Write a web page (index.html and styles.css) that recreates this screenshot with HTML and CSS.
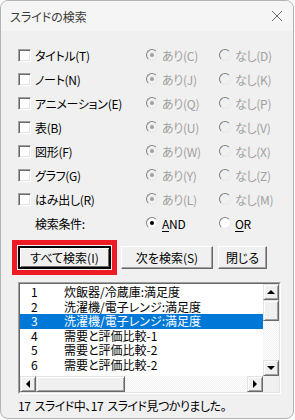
FILE: index.html
```html
<!DOCTYPE html>
<html lang="ja">
<head>
<meta charset="UTF-8">
<meta name="viewport" content="width=device-width, initial-scale=1.0">
<title>スライドの検索</title>
<link rel="stylesheet" href="styles.css">
</head>
<body>
<div class="window">
  <div class="titlebar">
    <span class="title">スライドの検索</span>
    <svg class="close" width="12" height="12" viewBox="0 0 12 12">
      <path d="M1 1 L11 11 M11 1 L1 11" stroke="#6a6a6a" stroke-width="1" fill="none"/>
    </svg>
  </div>

  <div class="content">
    <div class="options">
      <div class="row">
        <label class="check"><span class="box"></span>タイトル(T)</label>
        <span class="radio off on"><span class="dot"></span>あり(C)</span>
        <span class="radio off"><span class="dot"></span>なし(D)</span>
      </div>
      <div class="row">
        <label class="check"><span class="box"></span>ノート(N)</label>
        <span class="radio off on"><span class="dot"></span>あり(J)</span>
        <span class="radio off"><span class="dot"></span>なし(K)</span>
      </div>
      <div class="row">
        <label class="check"><span class="box"></span>アニメーション(E)</label>
        <span class="radio off on"><span class="dot"></span>あり(Q)</span>
        <span class="radio off"><span class="dot"></span>なし(P)</span>
      </div>
      <div class="row">
        <label class="check"><span class="box"></span>表(B)</label>
        <span class="radio off on"><span class="dot"></span>あり(U)</span>
        <span class="radio off"><span class="dot"></span>なし(V)</span>
      </div>
      <div class="row">
        <label class="check"><span class="box"></span>図形(F)</label>
        <span class="radio off on"><span class="dot"></span>あり(W)</span>
        <span class="radio off"><span class="dot"></span>なし(X)</span>
      </div>
      <div class="row">
        <label class="check"><span class="box"></span>グラフ(G)</label>
        <span class="radio off on"><span class="dot"></span>あり(Y)</span>
        <span class="radio off"><span class="dot"></span>なし(Z)</span>
      </div>
      <div class="row">
        <label class="check"><span class="box"></span>はみ出し(R)</label>
        <span class="radio off on"><span class="dot"></span>あり(L)</span>
        <span class="radio off"><span class="dot"></span>なし(M)</span>
      </div>
      <div class="row">
        <span class="cond">検索条件:</span>
        <span class="radio on"><span class="dot"></span><span><u>A</u>ND</span></span>
        <span class="radio"><span class="dot"></span><span><u>O</u>R</span></span>
      </div>
    </div>

    <div class="buttons">
      <div class="mark"><button class="btn default">すべて検索(I)</button></div>
      <button class="btn wide">次を検索(S)</button>
      <button class="btn small">閉じる</button>
    </div>

    <div class="listbox">
      <div class="listinner">
        <div class="items">
          <div class="item"><span class="num">1</span>炊飯器/冷蔵庫:満足度</div>
          <div class="item"><span class="num">2</span>洗濯機/電子レンジ:満足度</div>
          <div class="item selected"><span class="num">3</span>洗濯機/電子レンジ:満足度</div>
          <div class="item"><span class="num">4</span>需要と評価比較-1</div>
          <div class="item"><span class="num">5</span>需要と評価比較-2</div>
          <div class="item"><span class="num">6</span>需要と評価比較-2</div>
        </div>
        <div class="vscroll">
          <span class="sbtn"><span class="arrow up"></span></span>
          <span class="thumb vthumb"></span>
          <span class="track"></span>
          <span class="sbtn"><span class="arrow down"></span></span>
        </div>
        <div class="hscroll">
          <span class="sbtn"><span class="arrow left"></span></span>
          <span class="thumb hthumb"></span>
          <span class="track"></span>
          <span class="sbtn"><span class="arrow right"></span></span>
        </div>
        <div class="corner"></div>
      </div>
    </div>

    <p class="status">17 スライド中、17 スライド見つかりました。</p>
  </div>
</div>
</body>
</html>
```

FILE: styles.css
```css
html, body {
  margin: 0;
  padding: 0;
  background-color: #fafafa;
}
body {
  font-family: "Noto Sans CJK JP", "Liberation Sans", sans-serif;
  font-size: 12px;
  color: #000;
}
.window {
  width: 294px;
  height: 419px;
  box-sizing: border-box;
  border: 1px solid #b4b4b4;
  border-radius: 8px;
  background-color: #f0f0f0;
  overflow: hidden;
}
.titlebar {
  height: 30px;
  background-color: #f5f5f5;
  display: flex;
  align-items: center;
  justify-content: space-between;
  padding: 0 9px 0 9px;
}
.title {
  color: #3a3a3a;
  font-feature-settings: "palt";
  font-size: 12px;
}
.close {
  margin-right: 1px;
}
.content {
  padding: 12px 0 0 11px;
}
.options {
  padding-left: 6px;
}
.row {
  display: grid;
  grid-template-columns: 128px 73px 1fr;
  align-items: center;
  height: 24px;
  font-feature-settings: "palt";
  letter-spacing: -0.3px;
}
.check {
  display: flex;
  align-items: center;
  gap: 4px;
}
.box {
  width: 11px;
  height: 11px;
  background-color: #fff;
  border: 1px solid;
  border-color: #a0a0a0 #fff #fff #a0a0a0;
  box-shadow: inset 1px 1px #696969, inset -1px -1px #e3e3e3;
}
.cond {
  padding-left: 17px;
}
.radio {
  display: flex;
  align-items: center;
  gap: 4px;
}
.radio .dot {
  width: 10px;
  height: 10px;
  border-radius: 50%;
  border: 1px solid;
  border-color: #808080 #e8e8e8 #e8e8e8 #808080;
  background-color: #fff;
  display: flex;
  align-items: center;
  justify-content: center;
}
.radio.on .dot::after {
  content: "";
  width: 4px;
  height: 4px;
  border-radius: 50%;
  background-color: #000;
}
.radio.off {
  color: #a0a0a0;
}
.radio.off .dot {
  background-color: #f0f0f0;
}
.radio.off.on .dot::after {
  background-color: #a0a0a0;
}
.radio u {
  text-decoration-thickness: 1px;
  text-underline-offset: 2px;
}
.buttons {
  display: flex;
  align-items: center;
  gap: 4px;
  margin-top: 5px;
}
.mark {
  border: 5px solid #ed1c24;
  padding: 1px;
}
.btn {
  font-family: inherit;
  font-size: 12px;
  height: 23px;
  padding: 0;
  background-color: #f0f0f0;
  border: 1px solid;
  border-color: #fff #696969 #696969 #fff;
  box-shadow: inset -1px -1px #a0a0a0;
  color: #000;
  font-feature-settings: "palt";
}
.btn.default {
  width: 93px;
  border-width: 2px;
  border-color: #000;
  box-shadow: inset 1px 1px #fff, inset -1px -1px #696969;
}
.btn.wide {
  width: 92px;
}
.btn.small {
  width: 49px;
  margin-left: 1px;
}
.listbox {
  width: 263px;
  height: 112px;
  box-sizing: border-box;
  margin: 7px 0 0 6px;
  border: 1px solid;
  border-color: #a0a0a0 #fff #fff #a0a0a0;
}
.listinner {
  height: 100%;
  box-sizing: border-box;
  border: 1px solid;
  border-color: #696969 #e3e3e3 #e3e3e3 #696969;
  background-color: #fff;
  display: grid;
  grid-template-columns: 1fr 16px;
  grid-template-rows: 1fr 16px;
}
.items {
  overflow: hidden;
  padding-top: 1px;
}
.item {
  height: 14.6px;
  line-height: 14.6px;
  padding-left: 11px;
  white-space: nowrap;
  font-feature-settings: "palt";
}
.item .num {
  display: inline-block;
  width: 33px;
}
.item.selected {
  background-color: #0078d7;
  color: #fff;
}
.vscroll, .hscroll {
  display: flex;
  background: repeating-conic-gradient(#f0f0f0 0 25%, #fff 0 50%) 0 0 / 2px 2px;
}
.vscroll {
  flex-direction: column;
}
.track {
  flex: 1;
}
.sbtn, .thumb {
  box-sizing: border-box;
  width: 16px;
  height: 16px;
  background-color: #f0f0f0;
  border: 1px solid;
  border-color: #e3e3e3 #696969 #696969 #e3e3e3;
  box-shadow: inset 1px 1px #fff, inset -1px -1px #a0a0a0;
  display: flex;
  align-items: center;
  justify-content: center;
}
.vthumb {
  height: 21px;
}
.hthumb {
  width: 89px;
}
.arrow {
  width: 0;
  height: 0;
  border: 4px solid transparent;
}
.arrow.up {
  border-bottom-color: #000;
  border-top-width: 0;
}
.arrow.down {
  border-top-color: #000;
  border-bottom-width: 0;
}
.arrow.left {
  border-right-color: #000;
  border-left-width: 0;
}
.arrow.right {
  border-left-color: #000;
  border-right-width: 0;
}
.corner {
  background-color: #f0f0f0;
}
.status {
  margin: 4px 0 0 6px;
  line-height: 16px;
  font-feature-settings: "palt";
  letter-spacing: -0.5px;
  word-spacing: 2px;
}
```
